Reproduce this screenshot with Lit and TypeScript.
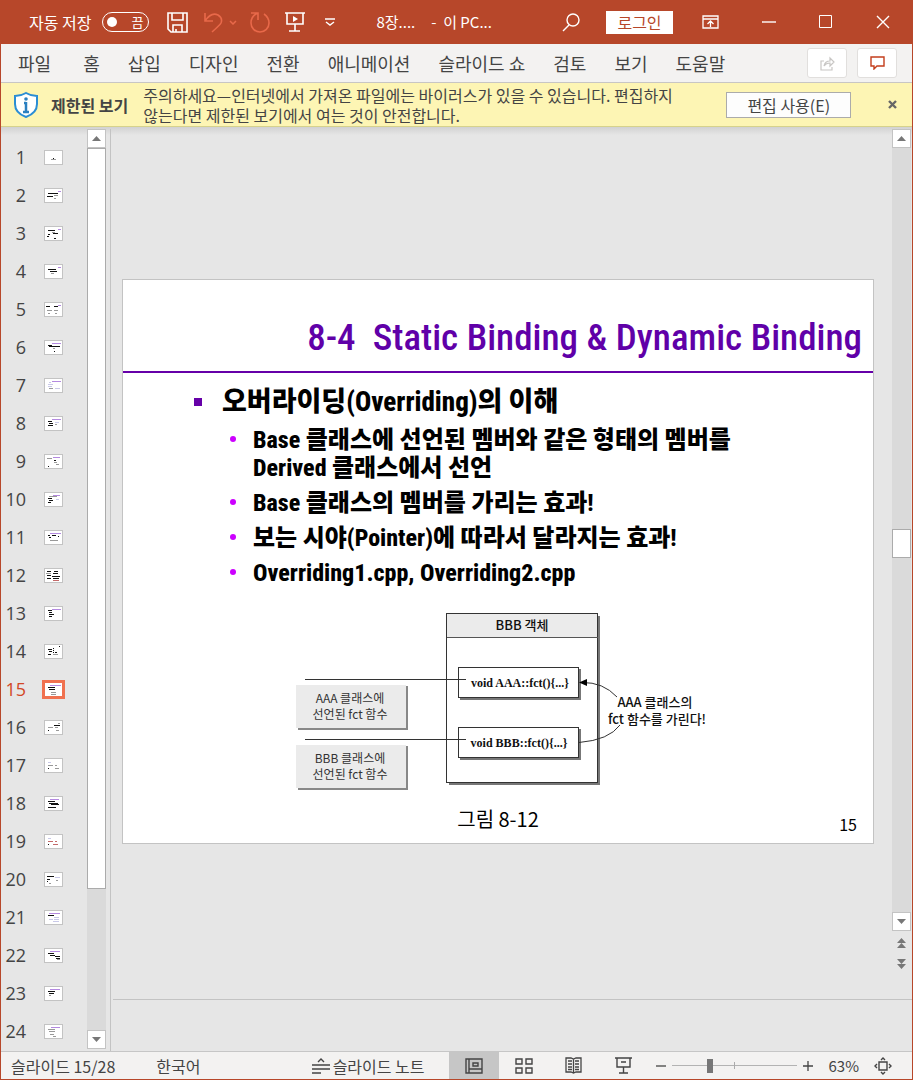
import { LitElement, html, css, svg } from "lit";
import { customElement, property } from "lit/decorators.js";

const KR = css`"Noto Sans CJK KR", "Noto Sans", sans-serif`;

/* Each mark is [x, y, width, colour key] inside a 17 x 13 miniature. */
type Mark = [number, number, number, string];
const INKS: Record<string, string> = { k: "#111", g: "#999", p: "#b48ae0", l: "#c9c9e8", r: "#c46a6a" };
const THUMBS: Mark[][] = [
  [[6, 8, 5, "g"], [8, 7, 1, "k"]],
  [[3, 4, 10, "k"], [13, 2, 3, "p"], [9, 6, 4, "g"], [2, 7, 6, "k"], [9, 9, 2, "g"]],
  [[3, 3, 7, "k"], [13, 2, 3, "p"], [7, 5, 3, "g"], [3, 7, 2, "k"], [8, 6, 5, "k"], [2, 9, 2, "k"], [9, 11, 2, "k"]],
  [[3, 4, 8, "k"], [13, 2, 3, "p"], [5, 6, 7, "k"], [6, 8, 3, "g"]],
  [[1, 3, 4, "k"], [9, 3, 4, "k"], [13, 2, 3, "p"], [2, 7, 5, "g"], [9, 7, 4, "g"], [3, 10, 2, "g"], [10, 10, 2, "g"]],
  [[7, 2, 9, "p"], [3, 4, 4, "k"], [4, 5, 11, "k"], [8, 7, 2, "g"], [9, 10, 1, "k"]],
  [[7, 2, 9, "p"], [4, 3, 2, "l"], [3, 5, 5, "l"], [3, 7, 4, "l"], [4, 9, 4, "g"], [10, 9, 5, "l"]],
  [[7, 2, 9, "p"], [3, 4, 4, "k"], [4, 6, 4, "k"], [10, 5, 4, "l"], [10, 7, 2, "g"], [3, 8, 5, "k"]],
  [[8, 2, 7, "p"], [2, 3, 5, "g"], [9, 5, 2, "k"], [9, 7, 3, "g"], [11, 9, 3, "g"], [3, 11, 1, "k"]],
  [[8, 2, 7, "p"], [4, 3, 8, "g"], [3, 5, 4, "k"], [11, 6, 3, "l"], [4, 7, 4, "k"], [3, 9, 3, "k"]],
  [[5, 2, 11, "p"], [3, 4, 2, "k"], [7, 4, 4, "k"], [4, 6, 2, "k"], [13, 5, 1, "k"], [5, 9, 8, "g"]],
  [[2, 2, 4, "k"], [9, 2, 4, "k"], [1, 4, 5, "g"], [8, 4, 5, "k"], [2, 6, 4, "k"], [7, 7, 8, "k"], [2, 9, 4, "k"], [8, 9, 6, "k"], [8, 11, 6, "r"]],
  [[7, 2, 9, "p"], [3, 3, 4, "k"], [4, 5, 3, "k"], [4, 7, 5, "k"], [4, 9, 3, "k"]],
  [[3, 4, 4, "k"], [14, 1, 1, "k"], [4, 6, 3, "k"], [8, 3, 1, "k"], [8, 5, 1, "k"], [8, 7, 1, "k"], [10, 7, 2, "k"], [3, 9, 3, "k"], [8, 9, 5, "g"]],
  [[5, 2, 11, "p"], [3, 4, 7, "k"], [4, 6, 6, "k"], [6, 9, 5, "g"], [6, 11, 5, "g"]],
  [[13, 2, 2, "g"], [9, 4, 6, "k"], [3, 6, 5, "g"], [10, 6, 3, "g"], [3, 9, 1, "k"], [11, 9, 3, "g"]],
  [[3, 3, 3, "l"], [3, 6, 5, "g"], [10, 6, 2, "g"], [3, 9, 1, "k"], [10, 9, 4, "g"]],
  [[5, 2, 9, "p"], [3, 4, 7, "k"], [4, 6, 9, "k"], [6, 7, 8, "k"], [3, 10, 8, "k"]],
  [[3, 3, 3, "l"], [3, 6, 5, "r"], [10, 6, 2, "r"], [3, 9, 1, "k"], [8, 9, 5, "r"]],
  [[2, 3, 7, "k"], [10, 4, 5, "l"], [2, 6, 3, "k"], [2, 8, 1, "k"], [11, 7, 2, "g"], [4, 10, 2, "g"]],
  [[4, 2, 11, "p"], [3, 4, 6, "k"], [9, 6, 5, "l"], [4, 8, 4, "l"], [9, 8, 5, "l"], [8, 10, 6, "l"]],
  [[5, 2, 10, "p"], [3, 4, 6, "k"], [5, 6, 5, "k"], [10, 7, 5, "k"], [11, 9, 4, "k"], [12, 10, 3, "g"]],
  [[5, 2, 10, "p"], [3, 4, 7, "k"], [4, 6, 5, "k"], [4, 8, 2, "g"]],
  [[6, 2, 9, "p"], [3, 4, 7, "g"], [4, 6, 6, "g"], [5, 9, 4, "g"], [8, 11, 3, "g"]],
];

@customElement("slide-thumb")
class SlideThumb extends LitElement {
  @property({ type: Number }) number = 1;
  @property({ type: Boolean, reflect: true }) selected = false;
  static styles = css`
    :host { display: block; }
    .row {
      display: flex; align-items: center; width: 100%; height: 38px; padding: 0; border: 0;
      background: none; color: #444; font: 18px/24px "Open Sans", ${KR}; text-align: right;
    }
    .num { width: 25px; margin-right: 15px; }
    .frame { display: block; padding: 2px; border: 1px solid transparent; }
    .mini { display: block; width: 17px; height: 13px; border: 1px solid #c3c3c3; background: #fff; }
    :host([selected]) .row { color: #d24726; }
    :host([selected]) .frame { margin-left: 1px; background: #fff; border: 3px solid #f0714f; padding: 0; }
    :host([selected]) .mini { border: 0; }
  `;
  render() {
    return html`<button class="row" aria-label="슬라이드 ${this.number}">
      <span class="num">${this.number}</span>
      <span class="frame"><svg class="mini" viewBox="0 0 17 13">
        ${THUMBS[this.number - 1].map(([x, y, w, c]) => svg`<rect x=${x} y=${y} width=${w} height="1" fill=${INKS[c]} />`)}
      </svg></span>
    </button>`;
  }
}

@customElement("scroll-rail")
class ScrollRail extends LitElement {
  @property({ type: Number }) before = 0;
  @property({ type: Number }) size = 1;
  @property({ type: Number }) after = 1;
  static styles = css`
    :host { display: flex; flex-direction: column; width: 19px; background: #dadada; }
    .arrow {
      flex: none; box-sizing: border-box; width: 19px; height: 19px; padding: 0;
      border: 1px solid #c3c3c3; background: #fff; display: grid; place-items: center;
    }
    .arrow svg { display: block; }
    .thumb { box-sizing: border-box; border: 1px solid #ababab; background: #fff; }
  `;
  render() {
    return html`
      <button class="arrow" aria-label="위로"><svg width="9" height="5"><path d="M0 5 4.500 0 9 5z" fill="#777" /></svg></button>
      <div style="flex:${this.before} 0 0"></div>
      <div class="thumb" style="flex:${this.size} 0 0"></div>
      <div style="flex:${this.after} 0 0"></div>
      <button class="arrow" aria-label="아래로"><svg width="9" height="5"><path d="M0 0 4.500 5 9 0z" fill="#777" /></svg></button>
    `;
  }
}

@customElement("lecture-slide")
class LectureSlide extends LitElement {
  static styles = css`
    :host {
      display: flex; flex-direction: column; box-sizing: border-box; width: 100%;
      aspect-ratio: 752 / 565; border: 1px solid #c3c3c3; background: #fff; color: #000; font-family: ${KR};
    }
    h1 {
      margin: 0; padding: 33px 11px 9px 0; border-bottom: 2px solid #6600a8; color: #6000a8;
      font: 500 37px/49px "Roboto Condensed", "Liberation Sans Narrow", ${KR}; text-align: right; white-space: pre;
    }
    ul { margin: 0; padding: 0; list-style: none; }
    .outer { padding: 10px 100px 0 71px; font-family: "Roboto Condensed", "Liberation Sans Narrow", ${KR}; }
    .head { display: flex; align-items: center; font-weight: 800; font-size: 27px; line-height: 38px; }
    .head::before { content: ""; width: 8px; height: 8px; margin-right: 20px; background: #6600a8; }
    .inner { padding: 5px 0 0 36px; display: flex; flex-direction: column; gap: 7px; }
    .inner li { display: flex; font-weight: 800; font-size: 24px; line-height: 28px; }
    .inner li::before { content: ""; flex: none; width: 6px; height: 6px; margin: 10px 17px 0 0; border-radius: 50%; background: #cc00ff; }
    .figure { display: block; margin: 23px 0 0 172px; width: 415px; height: 182px; }
    .figure text { font-family: ${KR}; font-size: 12px; fill: #333; text-anchor: middle; }
    .figure .strong { font-size: 13px; font-weight: 500; fill: #111; }
    .figure .code { font-family: "Liberation Serif", serif; font-weight: 700; font-size: 12px; fill: #111; }
    .foot { display: grid; grid-template-columns: 1fr auto 1fr; padding: 12px 16px 0; align-items: end; }
    .caption { grid-column: 2; font-size: 20px; line-height: 30px; }
    .page { text-align: right; font-size: 16px; line-height: 20px; }
  `;
  render() {
    return html`
      <h1>8-4  Static Binding &amp; Dynamic Binding</h1>
      <ul class="outer"><li>
        <div class="head">오버라이딩(Overriding)의 이해</div>
        <ul class="inner">
          <li><span>Base 클래스에 선언된 멤버와 같은 형태의 멤버를<br />Derived 클래스에서 선언</span></li>
          <li>Base 클래스의 멤버를 가리는 효과!</li>
          <li>보는 시야(Pointer)에 따라서 달라지는 효과!</li>
          <li>Overriding1.cpp, Overriding2.cpp</li>
        </ul>
      </li></ul>
      <svg class="figure" viewBox="0 0 415 182" role="img" aria-label="BBB 객체">
        <path d="M154 174h150V6" fill="none" stroke="#777" stroke-width="2" />
        <rect x="151.500" y="3.500" width="151" height="169" fill="#fff" stroke="#333" />
        <rect x="152" y="4" width="150" height="23" fill="#ebebeb" />
        <path d="M152 27.500h151" stroke="#555" />
        ${[57, 117].map((y) => svg`
          <path d="M165 ${y + 32}h120V${y + 2}" fill="none" stroke="#777" stroke-width="2" />
          <rect x="163.500" y=${y + 0.5} width="120" height="30" fill="#fff" stroke="#333" />
          <path d="M10 ${y + 12.5}h161" stroke="#333" />
          <rect x="3" y=${y + 19} width="110" height="44" fill="#888" />
          <rect x="1" y=${y + 18} width="110" height="43" fill="#ebebeb" />`)}
        <path d="M287 72.500Q308 72 322 87M284 132.500Q314 130 325 115" fill="none" stroke="#333" />
        <path d="M284 72.500 292 69v7z" />
        <text class="strong" x="227" y="20">BBB 객체</text>
        <text class="code" x="225" y="77">void AAA::fct(){...}</text>
        <text class="code" x="224" y="137">void BBB::fct(){...}</text>
        <text x="55" y="93">AAA 클래스에</text>
        <text x="55" y="109">선언된 fct 함수</text>
        <text x="55" y="153">BBB 클래스에</text>
        <text x="55" y="169">선언된 fct 함수</text>
        <text class="strong" x="360" y="97">AAA 클래스의</text>
        <text class="strong" x="362" y="114">fct 함수를 가린다!</text>
      </svg>
      <div class="foot"><span class="caption">그림 8-12</span><span class="page">15</span></div>
    `;
  }
}

const TABS = ["파일", "홈", "삽입", "디자인", "전환", "애니메이션", "슬라이드 쇼", "검토", "보기", "도움말"];

@customElement("app-root")
class AppRoot extends LitElement {
  static styles = css`
    :host {
      display: flex; flex-direction: column; box-sizing: border-box; height: 100vh; overflow: hidden;
      border: 1px solid #b7472a; border-top: 0; background: #e6e6e6; color: #444; font: 16px/20px ${KR};
    }
    button { font: inherit; color: inherit; background: none; border: 0; padding: 0; margin: 0; white-space: nowrap; }
    svg { display: block; flex: none; fill: none; stroke: currentColor; }
    .title { flex: none; display: flex; align-items: center; height: 44px; padding-left: 28px; background: #b7472a; color: #fff; }
    .auto { display: flex; align-items: center; gap: 11px; font-size: 16px; }
    .switch { display: flex; align-items: center; gap: 14px; box-sizing: border-box; width: 47px; height: 20px; padding: 0 5px 0 4px; border: 1px solid #fff; border-radius: 10px; font-size: 13px; line-height: 18px; }
    .knob { width: 10px; height: 10px; border-radius: 50%; background: #fff; }
    .quick { display: flex; align-items: center; margin-left: 18px; }
    .undo { display: flex; align-items: center; gap: 6px; margin: 0 13px 0 16px; color: #e8694a; }
    .redo { color: #e8694a; }
    .show { margin-left: 14px; }
    .more { margin-left: 20px; }
    .doc { display: flex; gap: 16px; flex: 1; margin-left: 41px; font-size: 15px; white-space: nowrap; }
    .login { width: 67px; height: 23px; background: #fff; color: #b7472a; font-size: 16px; line-height: 23px; margin: 0 29px 0 26px; }
    .win { display: flex; align-items: center; gap: 43px; padding-right: 22px; }
    .ribbon { flex: none; display: flex; align-items: center; height: 38px; padding: 0 15px 0 3px; border-bottom: 1px solid #c8c6c4; background: #f3f2f1; }
    .tabs { display: flex; flex: 1; }
    .tab { padding: 0 14px; font-size: 18px; line-height: 36px; }
    .tab:first-child { margin-right: 4px; }
    .acts { display: flex; gap: 10px; }
    .act { display: grid; place-items: center; box-sizing: border-box; width: 40px; height: 30px; border: 1px solid #e1dfdd; border-radius: 3px; background: #fff; }
    .act.off { color: #c8c6c4; }
    .act.note { color: #c43e1c; }
    .notice { flex: none; display: flex; align-items: center; height: 43px; padding: 0 15px 0 12px; border-bottom: 1px solid #d6d28c; background: #fdf5b4; }
    .notice strong { margin: 0 15px 0 12px; font-weight: 700; font-size: 16px; white-space: nowrap; }
    .notice p { flex: 1; margin: 0; max-width: 571px; word-break: keep-all; }
    .enable { box-sizing: border-box; width: 125px; height: 26px; margin-left: 12px; border: 1px solid #ababab; background: #fdfdfd; font-size: 16px; }
    .x { margin-left: auto; }
    .body { flex: 1; min-height: 0; display: flex; padding-top: 2px; background: linear-gradient(#d2d2d2, #e6e6e6 8px); }
    .list { flex: none; display: flex; width: 109px; border-right: 1px solid #c3c3c3; }
    .thumbs { flex: 1; margin: 0; padding: 9px 0 0; list-style: none; overflow: hidden; }
    .rail { margin: 0 4px 2px 0; }
    .stage { flex: 1; min-width: 0; display: grid; grid-template-columns: 1fr auto; grid-template-rows: 1fr 52px; }
    .desk { display: flex; align-items: center; padding: 0 18px 5px 11px; }
    .side { display: flex; flex-direction: column; align-items: center; padding: 0 1px 30px 0; }
    .side scroll-rail { flex: 1; }
    .jump { display: flex; flex-direction: column; gap: 11px; padding-top: 7px; }
    .jump svg { fill: #777; stroke: none; }
    .notes { grid-column: 1 / 3; margin-left: 2px; border-top: 1px solid #c3c3c3; }
    .status { flex: none; display: flex; align-items: center; height: 27px; border-top: 1px solid #c6c6c6; padding-left: 10px; background: #f3f2f1; font-size: 16px; }
    .count { margin-right: 41px; }
    .memo { display: flex; align-items: center; gap: 3px; margin-left: auto; margin-right: 24px; }
    .view { display: grid; place-items: center; width: 50px; height: 27px; }
    .view.on { background: #c6c6c6; }
    .zoom { display: flex; align-items: center; margin: 0 16px 0 7px; }
    .range { appearance: none; width: 125px; height: 16px; margin: 0 6px; background: linear-gradient(#ababab, #ababab) 50% 50% / 1px 7px no-repeat, linear-gradient(#b3b3b3, #b3b3b3) 50% 50% / 100% 1px no-repeat; }
    .range::-webkit-slider-thumb { appearance: none; width: 6px; height: 14px; background: #777; }
    .pct { margin-right: 15px; font-size: 15px; }
    .fit { margin-right: 20px; }
  `;
  render() {
    return html`
      <header class="title">
        <button class="auto" role="switch" aria-checked="false">자동 저장 <span class="switch"><span class="knob"></span>끔</span></button>
        <div class="quick">
          <button aria-label="저장"><svg width="21" height="21" stroke-width="1.600"><path d="M1 1h19v19H4l-3-3zM5 1v7h11V1M6 20v-7h9v7M9 20v-3" /></svg></button>
          <span class="undo"><button aria-label="실행 취소"><svg width="19" height="21" stroke-width="1.600"><path d="M1 1v8h8M1 9C5 3 10 1 14 3q5 3 3 8-1 2-9 9" /></svg></button><svg width="8" height="5" stroke-width="1.500"><path d="m1 1 3 3 3-3" /></svg></span>
          <button class="redo" aria-label="다시 실행"><svg width="21" height="21" stroke-width="1.600"><path d="M1 1h7v7M8 1C3 3 1 7 1 11a9 9 0 0 0 18 0c0-4-2-7-5-9" /></svg></button>
          <button class="show" aria-label="처음부터"><svg width="20" height="20" stroke-width="1.600"><path d="M0 1h20M2 1v11h16V1M10 12v7M4 19h11" /><path d="m8 4 5 3-5 3z" fill="#fff" stroke="none" /></svg></button>
          <button class="more" aria-label="빠른 실행 도구 모음"><svg width="10" height="8" stroke-width="1.400"><path d="M0 1h10M1 4l4 3 4-3" /></svg></button>
        </div>
        <div class="doc"><span>8장....</span><span>-&nbsp; 이 PC...</span></div>
        <button aria-label="검색"><svg width="18" height="19" stroke-width="1.400"><circle cx="11" cy="7" r="6" /><path d="m7 12-6 6" /></svg></button>
        <button class="login">로그인</button>
        <div class="win">
          <button aria-label="리본 표시"><svg width="17" height="14" stroke-width="1.300"><path d="M1 1h15v12H1zM1 4h15M8.500 12V6M5.500 9l3-3 3 3" /></svg></button>
          <button aria-label="최소화"><svg width="14" height="14" stroke-width="1.400"><path d="M0 7h14" /></svg></button>
          <button aria-label="최대화"><svg width="14" height="14"><path d="M.5.5h12v12H.5z" /></svg></button>
          <button aria-label="닫기"><svg width="14" height="14" stroke-width="1.400"><path d="m1 1 12 12M13 1 1 13" /></svg></button>
        </div>
      </header>
      <div class="ribbon">
        <nav class="tabs">${TABS.map((t) => html`<button class="tab">${t}</button>`)}</nav>
        <div class="acts">
          <button class="act off" aria-label="공유"><svg width="15" height="15" stroke-width="1.200"><path d="M4 5H1v9h11v-3M4 10q1-5 6-5V2l4 4-4 4V7Q6 7 4 10z" /></svg></button>
          <button class="act note" aria-label="메모"><svg width="15" height="14" stroke-width="1.400"><path d="M1 1h13v9H7l-3 3v-3H1z" /></svg></button>
        </div>
      </div>
      <div class="notice">
        <svg width="26" height="28"><path d="M13 2q5 3 11 3v8q0 9-11 13Q2 22 2 13V5q6 0 11-3z" fill="#fff" stroke="#2a8dd4" stroke-width="2" /><path d="M13 11v10M11 12h2M10 21h6" stroke="#2a7fc0" stroke-width="2.500" /><circle cx="13" cy="8" r="1.800" fill="#2a7fc0" stroke="none" /></svg>
        <strong>제한된 보기</strong>
        <p>주의하세요—인터넷에서 가져온 파일에는 바이러스가 있을 수 있습니다. 편집하지 않는다면 제한된 보기에서 여는 것이 안전합니다.</p>
        <button class="enable">편집 사용(E)</button>
        <button class="x" aria-label="닫기"><svg width="9" height="9" stroke-width="2.400"><path d="m1 1 7 7M8 1 1 8" stroke="#666" /></svg></button>
      </div>
      <main class="body">
        <div class="list">
          <ol class="thumbs">${THUMBS.map((_, i) => html`<li><slide-thumb .number=${i + 1} ?selected=${i === 14}></slide-thumb></li>`)}</ol>
          <scroll-rail class="rail" .before=${0} .size=${741} .after=${141}></scroll-rail>
        </div>
        <div class="stage">
          <div class="desk"><lecture-slide></lecture-slide></div>
          <div class="side">
            <scroll-rail .before=${382} .size=${27} .after=${355}></scroll-rail>
            <div class="jump">
              <button aria-label="이전 슬라이드"><svg width="9" height="10"><path d="M0 5 4.500 0 9 5zM0 10l4.500-5L9 10z" /></svg></button>
              <button aria-label="다음 슬라이드"><svg width="9" height="10"><path d="M0 0l4.500 5L9 0zM0 5l4.500 5L9 5z" /></svg></button>
            </div>
          </div>
          <div class="notes"></div>
        </div>
      </main>
      <footer class="status">
        <span class="count">슬라이드 15/28</span><span>한국어</span>
        <button class="memo"><svg width="18" height="16" stroke-width="1.400"><path d="M0 7h18M0 11h18M0 15h9M6 4l3-3 3 3" /></svg>슬라이드 노트</button>
        <button class="view on" aria-label="기본"><svg width="18" height="16" stroke-width="1.400"><path d="M1 1h16v14H1zM4 1v14M4 11h13M8 5h5v3H8z" /></svg></button>
        <button class="view" aria-label="여러 슬라이드"><svg width="18" height="16" stroke-width="1.400"><path d="M1 1h6v5H1zM11 1h6v5h-6zM1 10h6v5H1zM11 10h6v5h-6z" /></svg></button>
        <button class="view" aria-label="읽기용 보기"><svg width="17" height="17" stroke-width="1.300"><path d="M8.500 2v14M1 1h5l2.500 1L11 1h5v14h-5l-2.500 1L6 15H1zM3 4h4M3 7h4M3 10h4M3 12.500h4M10 4h4M10 7h4M10 10h4M10 12.500h4" /></svg></button>
        <button class="view" aria-label="슬라이드 쇼"><svg width="17" height="17" stroke-width="1.400"><path d="M0 1h17M2 1v9h13V1M8.500 10v6M4 16h9M6 5h5" /></svg></button>
        <div class="zoom">
          <button aria-label="축소"><svg width="10" height="10" stroke-width="1.300"><path d="M0 5h10" /></svg></button>
          <input class="range" type="range" min="0" max="100" value="30" aria-label="확대/축소" />
          <button aria-label="확대"><svg width="10" height="10" stroke-width="1.300"><path d="M0 5h10M5 0v10" /></svg></button>
        </div>
        <button class="pct">63%</button>
        <button class="fit" aria-label="창에 맞춤"><svg width="18" height="18" stroke-width="1.400"><path d="M5 5h8v8H5zM7 3l2-2 2 2M7 15l2 2 2-2M3 7 1 9l2 2M15 7l2 2-2 2" /></svg></button>
      </footer>
    `;
  }
}
